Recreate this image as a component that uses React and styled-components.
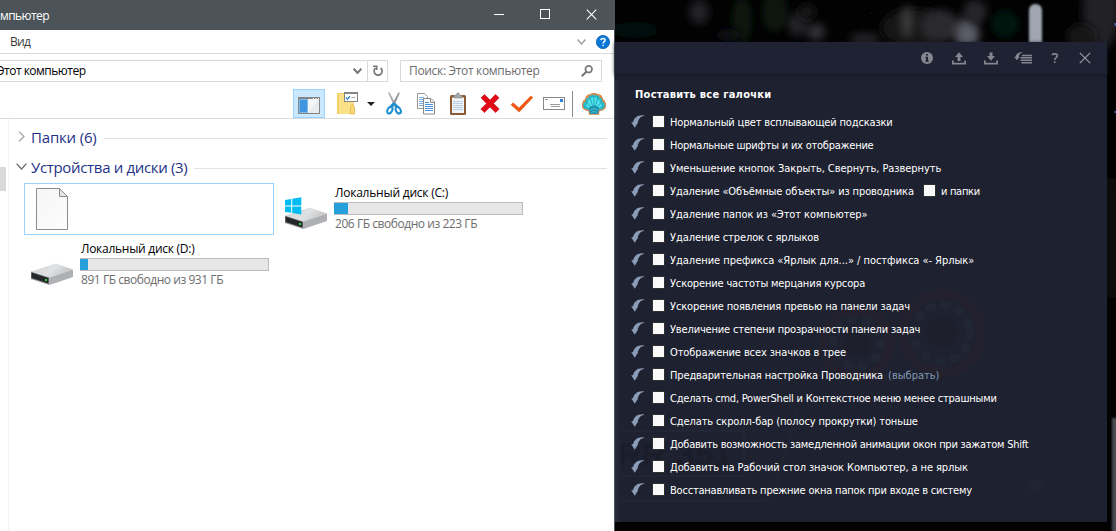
import React from "react";
import styled, { createGlobalStyle } from "styled-components";

const GlobalStyle = createGlobalStyle`
  * {
    box-sizing: border-box;
  }
  body {
    margin: 0;
    background: #000;
    overflow: hidden;
  }
`;

const Desktop = styled.div`
  position: relative;
  display: flex;
  width: 1116px;
  height: 531px;
  overflow: hidden;
  background: #020203;
`;

const Wallpaper = styled.svg`
  position: absolute;
  top: 0;
  right: 0;
`;

/* ---------- explorer window ---------- */

const Explorer = styled.div`
  position: relative;
  display: flex;
  flex-direction: column;
  width: 615px;
  height: 531px;
  background: #fff;
  border-right: 1px solid #4c555b;
  font-family: "Open Sans", "Noto Sans", sans-serif;
  font-size: 12px;
  color: #000;
`;

const Text = styled.span`
  white-space: pre;
  letter-spacing: ${({ $ls }) => $ls || 0}px;
  color: ${({ $color }) => $color || "inherit"};
`;

const TitleBar = styled.div`
  display: flex;
  align-items: center;
  justify-content: space-between;
  height: 30px;
  background: #4c5459;
  color: #fff;
`;

const WindowButtons = styled.div`
  display: flex;
  height: 30px;
`;

const WindowButton = styled.div`
  display: flex;
  align-items: center;
  justify-content: center;
  width: 46px;
  height: 28px;
`;

const MenuBar = styled.div`
  display: flex;
  align-items: center;
  height: 24px;
  padding: 0 4px 0 10px;
  border-bottom: 1px solid #dadbdc;
  color: #3b3b3b;
`;

const MenuIcons = styled.div`
  display: flex;
  align-items: center;
  gap: 10px;
  margin-left: auto;
`;

const AddressRow = styled.div`
  display: flex;
  height: 35px;
  padding: 6px 12px 7px 0;
`;

const AddressBox = styled.div`
  display: flex;
  align-items: center;
  width: 388px;
  height: 22px;
  padding-bottom: 1px;
  border: 1px solid #d9d9d9;
  border-left: none;
`;

const AddressLabel = styled.div`
  flex: 1;
  margin-left: -3px;
`;

const AddressChevron = styled.div`
  display: flex;
  align-items: center;
  width: 14px;
`;

const Refresh = styled.div`
  display: flex;
  align-items: center;
  justify-content: center;
  width: 20px;
  height: 20px;
  margin-bottom: -1px;
  border-left: 1px solid #d9d9d9;
`;

const SearchBox = styled.div`
  display: flex;
  align-items: center;
  justify-content: space-between;
  width: 202px;
  height: 22px;
  margin-left: 12px;
  padding: 0 8px 1px;
  border: 1px solid #d9d9d9;
  color: #6d6d6d;
`;

const Toolbar = styled.div`
  display: flex;
  align-items: center;
  justify-content: flex-end;
  height: 30px;
  padding-right: 4px;
  border-bottom: 1px solid #dadbdc;
`;

const ToolSlot = styled.div`
  display: flex;
  align-items: center;
  justify-content: center;
  width: ${({ $w }) => $w || 32}px;
  height: 29px;
`;

const PaneButton = styled(ToolSlot)`
  margin-right: 6px;
  padding-top: 3px;
  background: #cce8ff;
  border: 1px solid #99d1ff;
`;

const Separator = styled.div`
  width: 1px;
  height: 26px;
  margin: 0 5px 0 2px;
  background: #8c8c8c;
`;

const Body = styled.div`
  display: flex;
  flex: 1;
`;

const NavEdge = styled.div`
  width: 9px;
  padding-top: 48px;
  border-right: 1px solid #f2f2f2;
`;

const ScrollThumb = styled.div`
  width: 6px;
  height: 24px;
  background: #d9d9d9;
`;

const Files = styled.div`
  flex: 1;
  padding: 4px 7px 0;
`;

const Group = styled.div`
  display: flex;
  align-items: center;
  height: 30px;
  padding-bottom: 3px;
  font-size: 15px;
  color: #1e3287;
`;

const GroupArrow = styled.div`
  display: flex;
  justify-content: center;
  width: 11px;
  margin-right: 4px;
`;

const GroupLine = styled.div`
  flex: 1;
  height: 1px;
  margin: 4px 0 0 7px;
  background: #e2e2e2;
`;

const Drives = styled.div`
  display: grid;
  grid-template-columns: 250px 250px;
  grid-auto-rows: 52px;
  gap: 4px;
  padding-left: 8px;
`;

const Cell = styled.div`
  display: flex;
  border: 1px solid ${({ $selected }) => ($selected ? "#99d1ff" : "transparent")};
`;

const CellIcon = styled.div`
  width: 55px;
  padding-top: ${({ $top }) => $top}px;
  padding-left: ${({ $pad }) => $pad || 6}px;
`;

const DriveInfo = styled.div`
  display: flex;
  flex-direction: column;
  width: 189px;
  line-height: 18px;

  span {
    padding-left: 1px;
  }
`;

const Meter = styled.div`
  height: 13px;
  border: 1px solid #bcbcbc;
  border-left: none;
  background: #e6e6e6;
`;

const MeterFill = styled.div`
  height: 11px;
  background: #26a0da;
`;

/* ---------- tweaker window ---------- */

const Tweaker = styled.div`
  position: relative;
  width: 492px;
  height: 480px;
  margin-top: 42px;
  background: rgba(31, 34, 48, 0.975);
  font-family: "DejaVu Sans Condensed", "DejaVu Sans", sans-serif;
  font-size: 11px;
  color: #fff;
`;

const TweakerBar = styled.div`
  position: relative;
  display: flex;
  align-items: center;
  justify-content: flex-end;
  height: 32px;
  padding-right: 8px;
  background: #1f2233;
  box-shadow: 0 1px 4px #151722;
`;

const BarSlot = styled.div`
  display: flex;
  align-items: center;
  justify-content: center;
  width: ${({ $w }) => $w || 32}px;
  height: 32px;
`;

const TweakerBody = styled.div`
  position: relative;
  display: flex;
`;

const SideEdge = styled.div`
  width: 6px;
  height: 442px;
  margin: 6px 10px 0 0;
  background: linear-gradient(90deg, #282c3b, #1f2230);
`;

const OptionList = styled.div`
  padding-top: 9px;
`;

const Heading = styled.div`
  height: 27px;
  padding-left: 4px;
  line-height: 24px;
  font-weight: bold;
`;

const Option = styled.div`
  display: flex;
  align-items: center;
  height: 23px;

  span {
    padding-top: 2px;
  }
`;

const Box = styled.div`
  width: 13px;
  height: 13px;
  margin: 0 5px 0 ${({ $gap }) => $gap}px;
  border: 1px solid #2e2f31;
  background: #f9f9f9;
`;

const Link = styled(Text)`
  margin-left: 5px;
`;

const options = [
  { text: "Нормальный цвет всплывающей подсказки", ls: -0.16 },
  { text: "Нормальные шрифты и их отображение", ls: -0.23 },
  { text: "Уменьшение кнопок Закрыть, Свернуть, Развернуть", ls: -0.07 },
  { text: "Удаление «Объёмные объекты» из проводника", ls: -0.12, second: "и папки" },
  { text: "Удаление папок из «Этот компьютер»", ls: -0.09 },
  { text: "Удаление стрелок с ярлыков", ls: -0.09 },
  { text: "Удаление префикса «Ярлык для...» / постфикса «- Ярлык»", ls: -0.03 },
  { text: "Ускорение частоты мерцания курсора", ls: -0.16 },
  { text: "Ускорение появления превью на панели задач", ls: -0.13 },
  { text: "Увеличение степени прозрачности панели задач", ls: -0.16 },
  { text: "Отображение всех значков в трее", ls: -0.11 },
  { text: "Предварительная настройка Проводника", ls: -0.14, link: "(выбрать)" },
  { text: "Сделать cmd, PowerShell и Контекстное меню менее страшными", ls: -0.22 },
  { text: "Сделать скролл-бар (полосу прокрутки) тоньше", ls: -0.12 },
  { text: "Добавить возможность замедленной анимации окон при зажатом Shift", ls: -0.25 },
  { text: "Добавить на Рабочий стол значок Компьютер, а не ярлык", ls: -0.1 },
  { text: "Восстанавливать прежние окна папок при входе в систему", ls: -0.2 },
];

/* ---------- drawings ---------- */

const Chevron = ({ w = 9, h = 5, color = "#777", sw = 1.5 }) => (
  <svg width={w} height={h + 1} viewBox={`0 0 ${w} ${h + 1}`} fill="none">
    <path d={`M.6 .6 L${w / 2} ${h} L${w - 0.6} .6`} stroke={color} strokeWidth={sw} />
  </svg>
);

const RefreshIcon = () => (
  <svg width="12" height="12" viewBox="0 0 12 12" fill="none">
    <path d="M3.600 3A4 4 0 1 0 8.600 3" stroke="#777" strokeWidth="1.700" />
    <path d="M1 1.200H4.800V5" stroke="#777" strokeWidth="1.500" />
  </svg>
);

const SearchIcon = () => (
  <svg width="12" height="12" viewBox="0 0 12 12" fill="none">
    <circle cx="7.7" cy="4.2" r="3.3" stroke="#777" strokeWidth="1.7" />
    <path d="M5.3 6.7L.8 11.2" stroke="#777" strokeWidth="2" />
  </svg>
);

const HelpIcon = () => (
  <svg width="14" height="14" viewBox="0 0 14 14">
    <circle cx="7" cy="7" r="6.6" fill="#0a78d7" stroke="#075fae" strokeWidth=".8" />
    <path
      d="M4.9 5.1C5 3.2 9.1 3 9.1 5.2 9.1 6.7 7.1 6.6 7.1 8.5M7.1 9.7v1.4"
      fill="none"
      stroke="#fff"
      strokeWidth="1.5"
    />
  </svg>
);

const PaneIcon = () => (
  <svg width="22" height="17" viewBox="0 0 22 17">
    <rect x=".5" y=".5" width="21" height="16" fill="#f4f5f6" stroke="#858585" />
    <rect width="22" height="2" fill="#858585" />
    <path d="M15 1.5h1M17.5 1.5h1M20 1.5h1" stroke="#fff" />
    <rect x="1.5" y="2.5" width="8" height="13" fill="#4197df" stroke="#7dbbed" />
    <path d="M21 2v14H10z" fill="#e9eaec" />
  </svg>
);

const FolderIcon = () => (
  <svg width="22" height="23" viewBox="0 0 22 23">
    <path d="M1 1h11v21H1z" fill="#f3cf66" />
    <path d="M3 2h15v11l-2 2v7H3z" fill="#fbe08a" />
    <path d="M14.500 15l2-3 2 3v7h-4z" fill="#f8d873" stroke="#e2b64c" strokeWidth=".800" />
    <rect x="8.500" y=".5" width="13" height="9" fill="#fff" stroke="#858585" />
    <rect x="8" y="0" width="14" height="2" fill="#858585" />
    <path d="M10 5.5l1.5 1.7 2.5-3" fill="none" stroke="#2f83d5" strokeWidth="1.3" />
    <path d="M15.500 5.500h4" stroke="#aaa" />
  </svg>
);

const ScissorsIcon = () => (
  <svg width="16" height="23" viewBox="0 0 16 23" fill="none">
    <path d="M2 0.500L3.600 .5 10.800 14 8.400 15z" fill="#a7adb2" />
    <path d="M14 .5L12.400 .5 5.200 14 7.600 15z" fill="#8d949a" />
    <path d="M8 11.500L4.500 15M8 11.500l3.500 3.500" stroke="#1e90d0" strokeWidth="2.600" />
    <ellipse cx="3.8" cy="18.2" rx="2.3" ry="3.5" transform="rotate(28 3.8 18.2)" stroke="#1e90d0" strokeWidth="2.100" />
    <ellipse cx="12.2" cy="18.2" rx="2.3" ry="3.5" transform="rotate(-28 12.2 18.2)" stroke="#1e90d0" strokeWidth="2.100" />
  </svg>
);

const CopyIcon = () => (
  <svg width="20" height="22" viewBox="0 0 20 22">
    <path d="M1.500 .5h7l3 3v12h-10z" fill="#fff" stroke="#999" />
    <path d="M3 4.5h5M3 6.5h6M3 8.5h6M3 10.5h6M3 12.5h6" stroke="#7aaee8" />
    <path d="M7.500 5.500h7.500l3.500 3.500v12h-11z" fill="#fff" stroke="#8a8a8a" />
    <path d="M14.5 5.5v4h4" fill="none" stroke="#8a8a8a" />
    <path d="M9 9.5h4M9 11.5h8M9 13.5h8M9 15.5h8M9 17.5h8" stroke="#4a90e2" />
  </svg>
);

const ClipboardIcon = () => (
  <svg width="18" height="24" viewBox="0 0 18 24">
    <rect x="1" y="3" width="16" height="20" rx="1.500" fill="#8b5a33" />
    <rect x="3" y="5.500" width="12" height="15.500" fill="#f1f6fa" />
    <path d="M4 9.5h10M4 11.5h10M4 13.5h10M4 15.5h10M4 17.5h10" stroke="#b8cddd" />
    <path d="M5 6V3.5l2.5-.5L8 1h2l.5 2 2.5.5V6z" fill="#a4a6a8" stroke="#8b8d8f" strokeWidth=".6" />
  </svg>
);

const DeleteIcon = () => (
  <svg width="20" height="19" viewBox="0 0 20 19">
    <path
      d="M4.5 .5L10 6 15.5 .5 19 3.8 13.5 9.5 19.2 15 15.6 18.6 10 13 4.4 18.6 .8 15 6.5 9.5 1 3.8z"
      fill="#e00b16"
      stroke="#c30d12"
      strokeWidth=".6"
    />
  </svg>
);

const CheckIcon = () => (
  <svg width="24" height="18" viewBox="0 0 24 18">
    <path d="M1 9.8L3 7.8 9 13 20.8 1 22.8 2.6 9.2 17z" fill="#f2570f" stroke="#d94708" strokeWidth=".5" />
  </svg>
);

const MailIcon = () => (
  <svg width="22" height="13" viewBox="0 0 22 13">
    <rect x=".5" y=".5" width="21" height="12" fill="#fff" stroke="#888" />
    <path d="M2 2.500h3M7 7.500h10M8 9.500h9" stroke="#999" />
    <rect x="17" y="2" width="3" height="3" fill="#2f83d5" />
  </svg>
);

const ShellIcon = () => (
  <svg width="24" height="22" viewBox="0 0 24 22">
    <path
      d="M7.500 21l-.5-3.500C2 17.500 0 14.500.6 11 1 8.500 2.500 7 3.600 6.500 4 3 6.500 1.500 8.500 2 10 0 14 0 15.500 2c2.500-.5 4.500 1 5 4.500 1.200.8 2.600 2 2.900 4.500.5 3.500-1.400 6.500-6.400 6.500L16.500 21z"
      fill="#25bccd"
      stroke="#e08442"
      strokeWidth="1.300"
    />
    <path d="M4 14C5 8 9 4 12 4s7 4 8 10l-5 5H9z" fill="#4ee3ec" />
    <path
      d="M10.500 18L2.500 13M10.800 17L4 8M11.300 16L8 4M12 16V3M12.700 16L16 4M13.200 17L20 8M13.500 18l8-5"
      fill="none"
      stroke="#128aa0"
      strokeWidth=".800"
      opacity=".8"
    />
    <path d="M6.500 15q5.500-5 11 0L16 21H8z" fill="#1f93ad" />
    <path d="M8.500 17q3.500-3 7 0M9 19.500q3-2 6 0" fill="none" stroke="#58cfdd" strokeWidth=".800" />
    <path d="M1.500 7.500l2 1.500M5 3l1.500 2M19 3l-1.500 2M22.500 7.500l-2 1.500M12 1v1.500" stroke="#f28a2e" strokeWidth="1.500" />
  </svg>
);

const FileIcon = () => (
  <svg width="33" height="43" viewBox="0 0 33 43">
    <defs>
      <linearGradient id="sheet" x1="0" y1="0" x2="1" y2="1">
        <stop offset="0" stopColor="#f4f5f5" />
        <stop offset="1" stopColor="#fdfdfd" />
      </linearGradient>
    </defs>
    <path d="M.5 .5h23l8 8v33H.5z" fill="url(#sheet)" stroke="#8c8c8c" />
    <path d="M23.500 .5v8h8z" fill="#e3e4e4" stroke="#8c8c8c" />
  </svg>
);

const DriveIcon = ({ windows }) => (
  <svg width="44" height="34" viewBox="0 0 44 34">
    <defs>
      <linearGradient id="lid" x1="0" y1="0" x2="1" y2=".4">
        <stop offset="0" stopColor="#d2d3d5" />
        <stop offset=".6" stopColor="#e0e1e3" />
        <stop offset="1" stopColor="#c4c5c7" />
      </linearGradient>
    </defs>
    <path d="M0 18.500L25 10.500 42 16.500 18.500 24.500z" fill="url(#lid)" />
    <path d="M18.500 24.500L42 16.500V24L18.500 32z" fill="#aeb0b3" />
    <path d="M0 18.500l18.500 6V32L0 26z" fill="#8e9092" />
    <path d="M.5 19.500l17 5.500V30.500L.5 25z" fill="#25282a" />
    <rect x="14" y="26" width="2" height="2" fill="#23d83a" />
    {windows && (
      <path d="M0 3L6.200 1.900V8.500H0zM7.200 1.700L16.300 .3V8.500H7.200zM0 9.500h6.200v6.300L0 15zM7.200 9.500h9.100v8L7.200 16z" fill="#00bcf2" />
    )}
  </svg>
);

const UndoIcon = () => (
  <svg width="13" height="13" viewBox="0 0 13 13">
    <path d="M13 1C9.800 1.400 8 3.300 6.600 7.200H7.200L3.800 12.800.2 7.200H2C3.200 2.600 6.800-.4 13 .4z" fill="#8b9cb9" />
  </svg>
);

const InfoIcon = () => (
  <svg width="12" height="12" viewBox="0 0 12 12">
    <circle cx="6" cy="6" r="6" fill="#85868f" />
    <path d="M5 2h2v1.600H5zM4.500 4.800H7v3.700h.8v1.200H4.300V8.500H5V6h-.5z" fill="#1f2233" />
  </svg>
);

const TrayIcon = ({ down }) => (
  <svg width="14" height="13" viewBox="0 0 14 13" fill="#85868f">
    <path d="M0 8.500h1.700v2.300h10.600V8.500H14v4H0z" />
    <path d={down ? "M5.500 .5h3V4H11L7 8.800 3 4h2.500z" : "M5.500 9V5H3L7 .3 11 5H8.500v4z"} />
  </svg>
);

const UndoListIcon = () => (
  <svg width="18" height="12" viewBox="0 0 18 12">
    <path d="M9 .4C6.500.8 5.200 2.200 4.700 4.700H5.800L2.900 8.300 0 4.700h1.700C2.400 1.500 4.500-.3 9 .4z" fill="#85868f" />
    <path d="M8 3.500h10M6.500 5.800H18M6.500 8.200H18M7.500 10.700H18" stroke="#85868f" strokeWidth="1.500" />
  </svg>
);

const CloseIcon = ({ size, color, sw }) => (
  <svg width={size} height={size} viewBox="0 0 12 12">
    <path d="M.8 .8L11.200 11.200M11.200 .8L.8 11.200" stroke={color} strokeWidth={sw} />
  </svg>
);

const QuestionIcon = () => (
  <svg width="8" height="10" viewBox="0 0 8 10" fill="none">
    <path d="M1 2C2 .5 6.300.3 6.300 2.800 6.300 4.800 3.700 4.500 3.700 7M3.700 8.300V10" stroke="#85868f" strokeWidth="1.700" />
  </svg>
);

/* x, y, rx, ry, fill */
const blobs = [
  [84, 12, 10, 12, "#242427"],
  [127, 20, 10, 24, "#07160f"],
  [160, 12, 13, 20, "#071511"],
  [113, 35, 12, 6, "#0f0f12"],
  [183, 24, 11, 12, "#242327"],
  [201, 32, 9, 9, "#333237"],
  [192, 12, 9, 8, "#161518"],
  [20, 30, 24, 8, "#050d07"],
  [300, 28, 34, 20, "#151518"],
  [292, 22, 6, 16, "#3c3a3e"],
  [250, 39, 16, 5, "#2b2a2e"],
  [256, 13, 4, 4, "#10100f"],
  [325, 26, 20, 16, "#2a292e"],
  [352, 34, 12, 16, "#5c5b67"],
  [360, 12, 12, 12, "#26262a"],
  [390, 24, 14, 14, "#061210"],
  [486, 10, 18, 40, "#222225"],
  [466, 36, 14, 12, "#151517"],
];

const Wheel = ({ cx, cy, r }) => (
  <g opacity=".3">
    <circle cx={cx} cy={cy} r={r} fill="none" stroke="#34212f" strokeWidth="9" />
    <circle cx={cx} cy={cy} r={r * 0.72} fill="none" stroke="#263442" strokeWidth="9" strokeLinecap="round" strokeDasharray="2 13" />
    <circle cx={cx} cy={cy} r={r * 0.42} fill="#211d2b" />
  </g>
);

const WallpaperArt = () => (
  <Wallpaper width="501" height="531" viewBox="0 0 501 531">
    <defs>
      <filter id="soft" x="-100%" y="-100%" width="300%" height="300%">
        <feGaussianBlur stdDeviation="4" />
      </filter>
      <filter id="edge" x="-50%" y="-50%" width="200%" height="200%">
        <feGaussianBlur stdDeviation="1.2" />
      </filter>
    </defs>
    {blobs.map(([x, y, rx, ry, fill]) => (
      <ellipse key={x} cx={x} cy={y} rx={rx} ry={ry} fill={fill} filter="url(#soft)" />
    ))}
    <rect x="414" y="4" width="13" height="60" rx="6" fill="#a0a5b0" filter="url(#edge)" />
    <rect x="492" y="58" width="9" height="120" fill="#020204" filter="url(#edge)" />
    <rect x="494" y="178" width="9" height="120" fill="#161618" filter="url(#soft)" />
    <rect x="497" y="418" width="8" height="130" fill="#4c4b52" filter="url(#edge)" />
    <rect x="414" y="481" width="13" height="9" fill="#56555d" />
    <path d="M499.500 23h2v3h-2zM499.500 111h2v2h-2z" fill="#3d67b5" />
  </Wallpaper>
);

const Reflection = styled.svg`
  position: absolute;
  top: 0;
  left: 0;
`;

/* the wallpaper showing faintly through the panel */
const PanelReflection = () => (
  <Reflection width="492" height="480" viewBox="0 0 492 480">
    <Wheel cx={327} cy={291} r={39} />
    <Wheel cx={242} cy={301} r={33} />
    <path d="M0 389h129v45H0M182 368l-22 78q-2 12-14 13H0" fill="none" stroke="#222533" strokeWidth="2" />
    <text x="2" y="424" fontFamily="Liberation Sans" fontSize="34" fontWeight="bold" fill="#1b1d2a">
      RR 351
    </text>
  </Reflection>
);

const OptionRow = ({ text, ls, second, link }) => (
  <Option>
    <UndoIcon />
    <Box $gap={8} />
    <Text $ls={ls}>{text}</Text>
    {second && (
      <>
        <Box $gap={9} />
        <Text $ls={-0.28}>{second}</Text>
      </>
    )}
    {link && <Link $color="#8299b4">{link}</Link>}
  </Option>
);

const Drive = ({ name, nameLs, free, used, windows }) => (
  <Cell>
    <CellIcon $top={13}>
      <DriveIcon windows={windows} />
    </CellIcon>
    <DriveInfo>
      <Text $ls={nameLs}>{name}</Text>
      <Meter>
        <MeterFill style={{ width: used }} />
      </Meter>
      <Text $ls={-0.45} $color="#6d6d6d">
        {free}
      </Text>
    </DriveInfo>
  </Cell>
);

export default function App() {
  return (
    <>
      <GlobalStyle />
      <Desktop>
        <WallpaperArt />
        <Explorer>
          <TitleBar>
            <Text $ls={-0.57}>мпьютер</Text>
            <WindowButtons>
              <WindowButton>
                <svg width="10" height="1">
                  <rect width="10" height="1" fill="#fff" />
                </svg>
              </WindowButton>
              <WindowButton>
                <svg width="10" height="10">
                  <rect x=".5" y=".5" width="9" height="9" fill="none" stroke="#fff" />
                </svg>
              </WindowButton>
              <WindowButton>
                <CloseIcon size={11} color="#fff" sw={1.2} />
              </WindowButton>
            </WindowButtons>
          </TitleBar>

          <MenuBar>
            <Text $ls={-0.7}>Вид</Text>
            <MenuIcons>
              <Chevron color="#a0a0a0" />
              <HelpIcon />
            </MenuIcons>
          </MenuBar>

          <AddressRow>
            <AddressBox>
              <AddressLabel>
                <Text $ls={-0.51}>Этот компьютер</Text>
              </AddressLabel>
              <AddressChevron>
                <Chevron sw={2} />
              </AddressChevron>
              <Refresh>
                <RefreshIcon />
              </Refresh>
            </AddressBox>
            <SearchBox>
              <Text $ls={-0.33}>Поиск: Этот компьютер</Text>
              <SearchIcon />
            </SearchBox>
          </AddressRow>

          <Toolbar>
            <PaneButton>
              <PaneIcon />
            </PaneButton>
            <ToolSlot>
              <FolderIcon />
            </ToolSlot>
            <ToolSlot $w={15}>
              <svg width="8" height="4">
                <path d="M0 0h8L4 4z" fill="#222" />
              </svg>
            </ToolSlot>
            <ToolSlot>
              <ScissorsIcon />
            </ToolSlot>
            <ToolSlot>
              <CopyIcon />
            </ToolSlot>
            <ToolSlot>
              <ClipboardIcon />
            </ToolSlot>
            <ToolSlot>
              <DeleteIcon />
            </ToolSlot>
            <ToolSlot>
              <CheckIcon />
            </ToolSlot>
            <ToolSlot>
              <MailIcon />
            </ToolSlot>
            <Separator />
            <ToolSlot>
              <ShellIcon />
            </ToolSlot>
          </Toolbar>

          <Body>
            <NavEdge>
              <ScrollThumb />
            </NavEdge>
            <Files>
              <Group>
                <GroupArrow>
                  <svg width="7" height="11" viewBox="0 0 7 11">
                    <path d="M1 .6L6 5.500 1 10.400" fill="none" stroke="#a0a0a0" strokeWidth="1.200" />
                  </svg>
                </GroupArrow>
                <Text $ls={-0.18}>Папки (6)</Text>
                <GroupLine />
              </Group>
              <Group>
                <GroupArrow>
                  <Chevron w={11} h={6} color="#666" sw={1.2} />
                </GroupArrow>
                <Text $ls={-0.33}>Устройства и диски (3)</Text>
                <GroupLine />
              </Group>
              <Drives>
                <Cell $selected>
                  <CellIcon $pad={11} $top={4}>
                    <FileIcon />
                  </CellIcon>
                </Cell>
                <Drive name="Локальный диск (C:)" nameLs={-0.23} free="206 ГБ свободно из 223 ГБ" used={14} windows />
                <Drive name="Локальный диск (D:)" nameLs={-0.27} free="891 ГБ свободно из 931 ГБ" used={8} />
              </Drives>
            </Files>
          </Body>
        </Explorer>

        <Tweaker>
          <PanelReflection />
          <TweakerBar>
            <BarSlot>
              <InfoIcon />
            </BarSlot>
            <BarSlot>
              <TrayIcon />
            </BarSlot>
            <BarSlot>
              <TrayIcon down />
            </BarSlot>
            <BarSlot>
              <UndoListIcon />
            </BarSlot>
            <BarSlot>
              <QuestionIcon />
            </BarSlot>
            <BarSlot $w={28}>
              <CloseIcon size={12} color="#9a9ba3" sw={1.2} />
            </BarSlot>
          </TweakerBar>
          <TweakerBody>
            <SideEdge />
            <OptionList>
              <Heading>
                <Text $ls={0.28}>Поставить все галочки</Text>
              </Heading>
              {options.map((o) => (
                <OptionRow key={o.text} {...o} />
              ))}
            </OptionList>
          </TweakerBody>
        </Tweaker>
      </Desktop>
    </>
  );
}
